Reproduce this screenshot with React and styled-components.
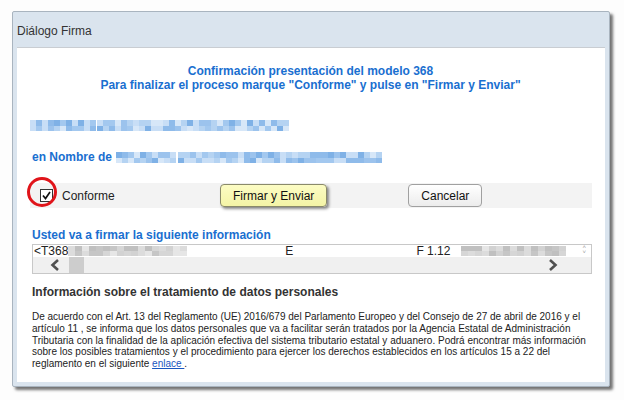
import React from "react"
import styled, { createGlobalStyle } from "styled-components"

const GlobalStyle = createGlobalStyle`
  html, body {
    margin: 0;
    padding: 0;
    background: #fdfdfd;
    font-family: "Liberation Sans", Arial, sans-serif;
  }
`

const blue = "#1a6fd0"

// pseudo random shades for the redacted (pixelated) parts
const shades = (seed, count, palette) => {
  let s = seed
  const out = []
  for (let i = 0; i < count; i++) {
    s = (s * 9301 + 49297) % 233280
    out.push(palette[Math.floor((s / 233280) * palette.length)])
  }
  return out
}

const bluePalette = ["#8fbbea", "#a3c8ef", "#b5d3f2", "#c8def6", "#7fb1e6", "#d7e7f8", "#9cc3ed"]
const grayPalette = ["#d2d2d2", "#dcdcdc", "#c6c6c6", "#e6e6e6", "#d6d6d6", "#c0c0c0"]

const MosaicWrap = styled.span`
  display: inline-grid;
  grid-template-rows: ${p => p.$h / 2}px ${p => p.$h / 2}px;
  grid-auto-flow: column;
  grid-auto-columns: ${p => p.$cell}px;
  vertical-align: middle;
  margin-right: ${p => p.$gap || 0}px;
`

const Cell = styled.span`
  display: block;
`

const Mosaic = ({ seed, width, h = 11, cell = 6, palette = bluePalette, gap }) => {
  const cols = Math.round(width / cell)
  const colors = shades(seed, cols * 2, palette)
  return (
    <MosaicWrap $h={h} $cell={cell} $gap={gap}>
      {colors.map((c, i) => (
        <Cell key={i} style={{ background: c }} />
      ))}
    </MosaicWrap>
  )
}

const Page = styled.div`
  width: 624px;
  height: 400px;
  padding: 11px 0 0 12px;
  box-sizing: border-box;
`

const Dialog = styled.div`
  width: 598px;
  height: 376px;
  box-sizing: border-box;
  background: #dae4ee;
  border: 1px solid #a9b4bf;
  border-radius: 2px;
  box-shadow: 3px 3px 3px rgba(0, 0, 0, 0.55);
  display: flex;
  flex-direction: column;
  padding: 0 4px 4px 4px;
`

const TitleBar = styled.div`
  height: 35px;
  display: flex;
  align-items: center;
  font-size: 12px;
  color: #333;
  padding-top: 2px;
  box-sizing: border-box;
`

const Body = styled.div`
  flex: 1;
  background: #fff;
  border-top: 1px solid #c9cdd2;
  padding: 16px 13px 0 13px;
  display: flex;
  flex-direction: column;
`

const Heading = styled.div`
  text-align: center;
  color: ${blue};
  font-weight: bold;
  font-size: 12px;
  line-height: 14px;
  margin-right: 1px;
`

const RedactedLine = styled.div`
  margin-top: 28px;
  height: 11px;
  display: flex;
`

const BlueLabel = styled.div`
  color: ${blue};
  font-weight: bold;
  font-size: 12px;
  display: flex;
  align-items: center;
  margin-top: ${p => p.$mt}px;
  padding-left: 2px;
  gap: 4px;
`

const ActionRow = styled.div`
  margin-top: 19px;
  height: 25px;
  background: #f3f3f3;
  display: flex;
  align-items: center;
  position: relative;
`

const CheckLabel = styled.label`
  display: flex;
  align-items: center;
  gap: 9px;
  font-size: 12px;
  color: #222;
  width: 180px;
  padding-left: 10px;
  position: relative;
`

const CheckBox = styled.span`
  width: 11px;
  height: 11px;
  border: 1px solid #333;
  background: #fff;
  display: flex;
  align-items: center;
  justify-content: center;
`

const Ring = styled.span`
  position: absolute;
  left: -3px;
  top: -12px;
  width: 24px;
  height: 24px;
  border: 3px solid #e0141a;
  border-radius: 50%;
`

const Button = styled.button`
  font-family: "Liberation Sans", Arial, sans-serif;
  font-size: 12px;
  color: #111;
  height: 23px;
  padding: 0 12px;
  border-radius: 4px;
  border: 1px solid ${p => (p.$primary ? "#8a8a6a" : "#a0a0a0")};
  background: ${p =>
    p.$primary
      ? "linear-gradient(#fcfcc4, #f4f4a6)"
      : "linear-gradient(#ffffff, #ececec)"};
  box-shadow: ${p => (p.$primary ? "2px 2px 3px rgba(0,0,0,0.45)" : "none")};
  margin-left: ${p => p.$ml || 0}px;
`

const DataBox = styled.div`
  margin-top: 2px;
  margin-left: 2px;
  height: 30px;
  border: 1px solid #c8c8c8;
  box-sizing: border-box;
  display: flex;
  flex-direction: column;
`

const DataLine = styled.div`
  height: 12px;
  background: #fff;
  display: flex;
  align-items: center;
  font-size: 12px;
  color: #222;
  white-space: nowrap;
  overflow: hidden;
  position: relative;
  padding-left: 1px;
`

const Spacer = styled.span`
  display: inline-block;
  width: ${p => p.$w}px;
`

const TinyArrows = styled.span`
  position: absolute;
  right: 5px;
  top: 0;
  font-size: 6px;
  line-height: 5px;
  color: #999;
  display: flex;
  flex-direction: column;
`

const ScrollRow = styled.div`
  flex: 1;
  background: #f0f0f0;
  display: flex;
  align-items: center;
  padding-left: 17px;
`

const Thumb = styled.span`
  width: 15px;
  height: 16px;
  background: #cdcdcd;
  margin-left: 9px;
`

const InfoTitle = styled.div`
  margin-top: 11px;
  padding-left: 2px;
  font-weight: bold;
  font-size: 12px;
  color: #333;
`

const InfoText = styled.p`
  margin: 12px 0 0 0;
  padding-left: 2px;
  font-size: 10px;
  line-height: 11.8px;
  color: #222;
  white-space: nowrap;

  a {
    color: #1a56c0;
  }
`

const Chevron = ({ dir }) => (
  <svg width="10" height="12" viewBox="0 0 10 12">
    <path
      d={dir === "left" ? "M8 1 L2.5 6 L8 11" : "M2 1 L7.5 6 L2 11"}
      fill="none"
      stroke="#505050"
      strokeWidth="2.6"
    />
  </svg>
)

const App = () => {
  return (
    <Page>
      <GlobalStyle />
      <Dialog>
        <TitleBar>Diálogo Firma</TitleBar>
        <Body>
          <Heading>
            Confirmación presentación del modelo 368
            <br />
            Para finalizar el proceso marque "Conforme" y pulse en "Firmar y Enviar"
          </Heading>

          <RedactedLine>
            <Mosaic seed={7} width={66} gap={1} />
            <Mosaic seed={31} width={192} />
          </RedactedLine>

          <BlueLabel $mt={19}>
            en Nombre de
            <span>
              <Mosaic seed={12} width={60} gap={2} />
              <Mosaic seed={55} width={204} />
            </span>
          </BlueLabel>

          <ActionRow>
            <CheckLabel>
              <CheckBox>
                <svg width="9" height="9" viewBox="0 0 9 9">
                  <path d="M1 4.5 L3.5 7.5 L8 1" fill="none" stroke="#111" strokeWidth="1.7" />
                </svg>
              </CheckBox>
              <Ring />
              Conforme
            </CheckLabel>
            <Button $primary>Firmar y Enviar</Button>
            <Button $ml={81}>Cancelar</Button>
          </ActionRow>

          <BlueLabel $mt={20}>Usted va a firmar la siguiente información</BlueLabel>

          <DataBox>
            <DataLine>
              &lt;T368
              <Mosaic seed={3} width={120} h={10} cell={7} palette={grayPalette} />
              <Spacer $w={98} />E
              <Spacer $w={123} />F 1.12
              <Spacer $w={11} />
              <Mosaic seed={91} width={108} h={10} cell={7} palette={grayPalette} />
              <TinyArrows>
                <span>˄</span>
                <span>˅</span>
              </TinyArrows>
            </DataLine>
            <ScrollRow>
              <Chevron dir="left" />
              <Thumb />
              <Spacer $w={464} />
              <Chevron dir="right" />
            </ScrollRow>
          </DataBox>

          <InfoTitle>Información sobre el tratamiento de datos personales</InfoTitle>
          <InfoText>
            De acuerdo con el Art. 13 del Reglamento (UE) 2016/679 del Parlamento Europeo y del Consejo de 27 de abril de 2016 y el
            <br />
            artículo 11 , se informa que los datos personales que va a facilitar serán tratados por la Agencia Estatal de Administración
            <br />
            Tributaria con la finalidad de la aplicación efectiva del sistema tributario estatal y aduanero. Podrá encontrar más información
            <br />
            sobre los posibles tratamientos y el procedimiento para ejercer los derechos establecidos en los artículos 15 a 22 del
            <br />
            reglamento en el siguiente <a href="#">enlace </a>.
          </InfoText>
        </Body>
      </Dialog>
    </Page>
  )
}

export default App
